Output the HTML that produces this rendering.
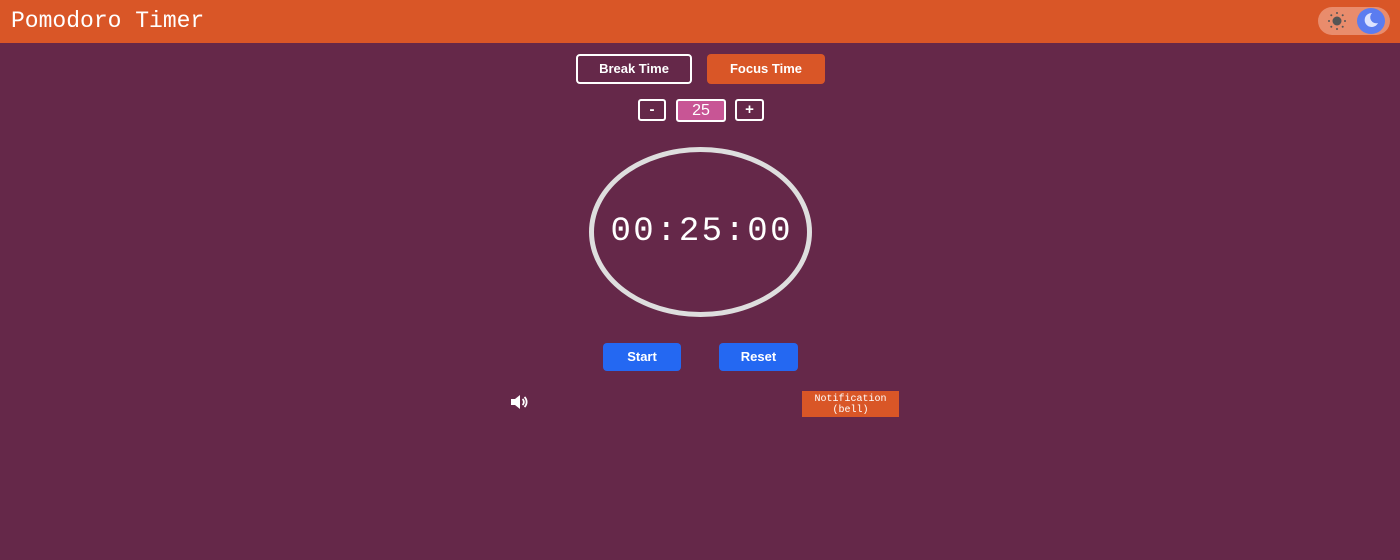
<!DOCTYPE html>
<html><head><style>
body{margin:0;width:1400px;height:560px;background:#652849;font-family:"Liberation Sans",sans-serif;position:relative;overflow:hidden}
.hdr{position:absolute;left:0;top:0;width:1400px;height:43px;background:#d95627}
.hdr h1{margin:0;position:absolute;left:11px;top:8px;font:normal 23px "Liberation Mono",monospace;color:#fff;letter-spacing:0px}
.tog{position:absolute;left:1318px;top:7px;width:72px;height:28px;border-radius:14px;background:#e98c6c}
.moon{position:absolute;left:1357px;top:8px;width:28px;height:26px;border-radius:50%;background:#5b7cf0}
.b{position:absolute;box-sizing:border-box;color:#fff;text-align:center;font-size:13px;font-weight:bold}
</style></head><body>
<div class="hdr"><h1>Pomodoro Timer</h1>
<div class="tog"></div><div class="moon"></div>
<svg style="position:absolute;left:1325px;top:10px" width="24" height="22" viewBox="0 0 24 22">
<circle cx="12" cy="11" r="4.5" fill="#555"/>
<g fill="#555"><circle cx="12" cy="3" r="1"/><circle cx="12" cy="19" r="1"/><circle cx="4" cy="11" r="1"/><circle cx="20" cy="11" r="1"/><circle cx="6.3" cy="5.3" r="1"/><circle cx="17.7" cy="5.3" r="1"/><circle cx="6.3" cy="16.7" r="1"/><circle cx="17.7" cy="16.7" r="1"/></g></svg>
<svg style="position:absolute;left:1362px;top:11px" width="18" height="18" viewBox="0 0 18 18"><path d="M10 2 A7 7 0 1 0 16 12 A6 6 0 0 1 10 2 Z" fill="#dde3ff"/></svg>
</div>
<div class="b" style="left:576px;top:54px;width:116px;height:30px;border:2px solid #fff;border-radius:4px;line-height:26px">Break Time</div>
<div class="b" style="left:707px;top:54px;width:118px;height:30px;background:#d95627;border-radius:4px;line-height:30px">Focus Time</div>
<div class="b" style="left:638px;top:99px;width:28px;height:22px;border:2px solid #fff;border-radius:3px;line-height:18px;font-size:15px">-</div>
<div class="b" style="left:676px;top:99px;width:50px;height:23px;border:2px solid #fff;border-radius:3px;background:#c85595;line-height:19px;font-size:16px;font-weight:normal">25</div>
<div class="b" style="left:735px;top:99px;width:29px;height:22px;border:2px solid #fff;border-radius:3px;line-height:18px;font-size:15px">+</div>
<div style="position:absolute;left:589px;top:147px;width:223px;height:170px;box-sizing:border-box;border:5px solid #dedede;border-radius:50%"></div>
<div style="position:absolute;left:589px;top:210px;width:223px;text-align:center;font:34px/44px 'Liberation Mono',monospace;letter-spacing:2.4px;text-indent:2.4px;color:#fff">00:25:00</div>
<div class="b" style="left:603px;top:343px;width:78px;height:28px;background:#2468f2;border-radius:4px;line-height:28px">Start</div>
<div class="b" style="left:719px;top:343px;width:79px;height:28px;background:#2468f2;border-radius:4px;line-height:28px">Reset</div>
<svg style="position:absolute;left:510px;top:394px" width="20" height="16" viewBox="0 0 20 16"><path d="M1 5h4l5-4v14l-5-4H1z" fill="#fff"/><path d="M12.5 5a4 4 0 0 1 0 6M14.5 3a7 7 0 0 1 0 10" stroke="#fff" stroke-width="1.8" fill="none"/></svg>
<div class="b" style="left:802px;top:391px;width:97px;height:26px;background:#d95627;font:10px/11px 'Liberation Mono',monospace;padding-top:3px">Notification<br>(bell)</div>
</body></html>
